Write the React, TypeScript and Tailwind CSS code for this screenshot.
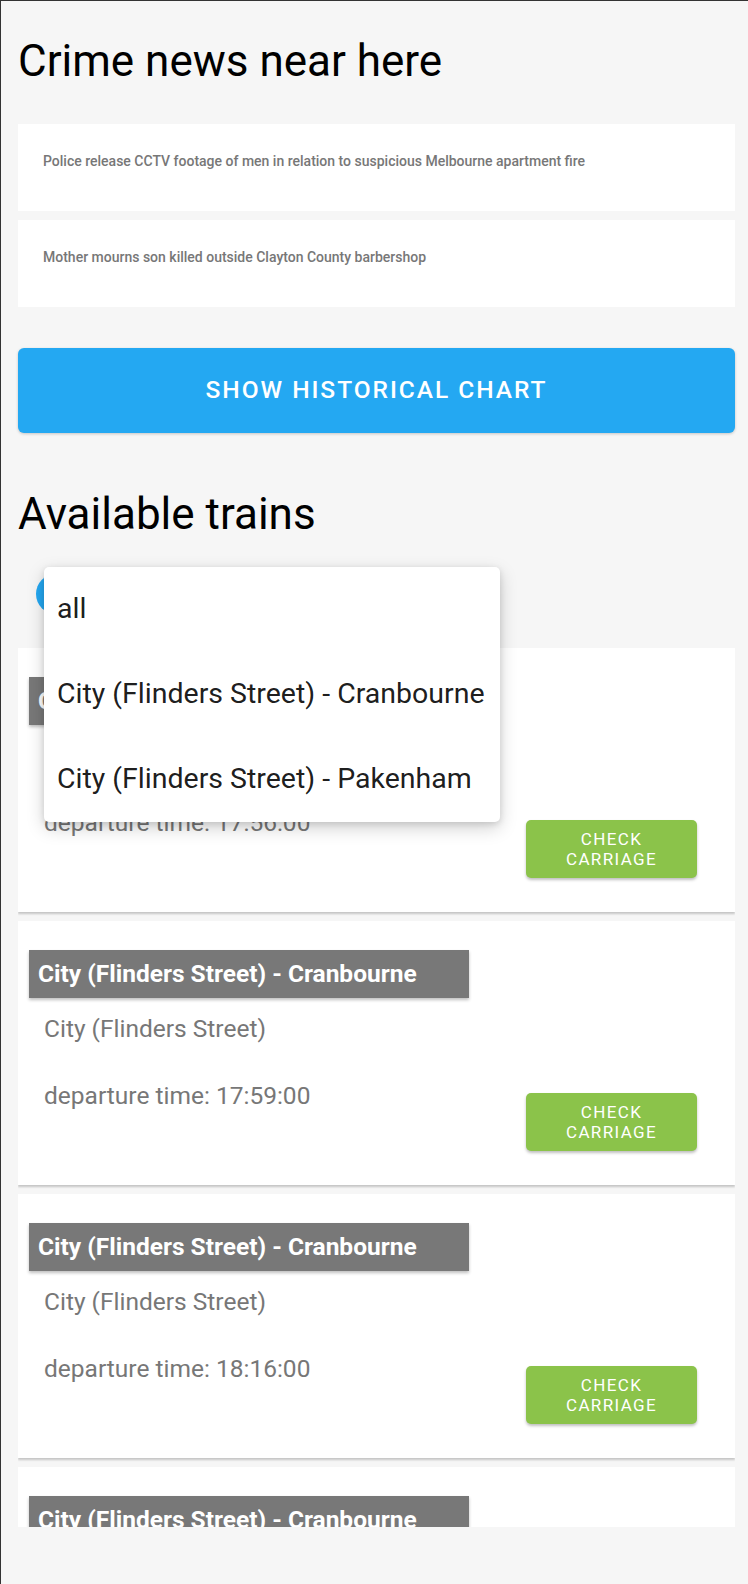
const news = [
  'Police release CCTV footage of men in relation to suspicious Melbourne apartment fire',
  'Mother mourns son killed outside Clayton County barbershop',
];

type Train = {
  line: string;
  station: string;
  departure: string;
};

const trains: Train[] = [
  { line: 'City (Flinders Street) - Cranbourne', station: 'City (Flinders Street)', departure: '17:56:00' },
  { line: 'City (Flinders Street) - Cranbourne', station: 'City (Flinders Street)', departure: '17:59:00' },
  { line: 'City (Flinders Street) - Cranbourne', station: 'City (Flinders Street)', departure: '18:16:00' },
  { line: 'City (Flinders Street) - Cranbourne', station: 'City (Flinders Street)', departure: '18:26:00' },
];

const menuOptions = ['all', 'City (Flinders Street) - Cranbourne', 'City (Flinders Street) - Pakenham'];

function TrainCard({ train }: { train: Train }) {
  return (
    <div className="h-[264px] shrink-0 bg-white shadow-[0_2px_2px_rgba(0,0,0,0.2)] pt-[29px] relative">
      <div className="ml-[11px] w-[440px] h-[48px] bg-[#787878] shadow-[0_2px_3px_rgba(0,0,0,0.25)] flex items-center pl-[9px]">
        <span className="text-white font-bold text-[24.5px] leading-none">{train.line}</span>
      </div>
      <p className="mt-[18px] ml-[26px] text-[24.5px] leading-[26px] text-[#777]">{train.station}</p>
      <div className="flex justify-between items-start mt-[41px] pl-[26px] pr-[38px]">
        <p className="text-[24.5px] leading-[26px] text-[#777]">departure time: {train.departure}</p>
        <button className="w-[171px] h-[58px] mt-[10px] rounded-[5px] bg-[#8bc34a] text-white text-[17px] leading-[20px] tracking-[0.08em] shadow-[0_2px_3px_rgba(0,0,0,0.25)]">
          CHECK
          <br />
          CARRIAGE
        </button>
      </div>
    </div>
  );
}

export default function App() {
  return (
    <div
      className="relative min-h-[1584px] bg-[#f6f6f6] border-l border-t border-[#333] pl-[17px] pr-[13px] overflow-hidden"
      style={{ fontFamily: 'Roboto, "Noto Sans", sans-serif' }}
    >
      <h1 className="pt-[38px] text-[44px] leading-[44px] text-black">Crime news near here</h1>

      <div className="mt-[41px] flex flex-col gap-[9px]">
        {news.map(item => (
          <div key={item} className="h-[87px] bg-white pl-[25px] pt-[28px]">
            <p className="text-[14px] leading-[18px] font-medium text-[#777]">{item}</p>
          </div>
        ))}
      </div>

      <button className="mt-[41px] w-full h-[85px] rounded-[6px] bg-[#24a8f2] text-white text-[24.5px] font-medium tracking-[0.08em] shadow-[0_1px_3px_rgba(0,0,0,0.2)]">
        SHOW HISTORICAL CHART
      </button>

      <h2 className="mt-[59px] text-[44px] leading-[44px] text-black">Available trains</h2>

      <div className="mt-[38px] ml-[18px] w-[40px] h-[40px] rounded-full bg-[#24a8f2]" />

      <div className="mt-[34px] h-[879px] overflow-hidden flex flex-col gap-[9px]">
        {trains.map((t, i) => (
          <TrainCard key={i} train={t} />
        ))}
      </div>

      {/* open select menu */}
      <ul className="absolute left-[43px] top-[566px] w-[456px] bg-white rounded-[5px] shadow-[0_6px_18px_rgba(0,0,0,0.18),0_2px_6px_rgba(0,0,0,0.12)]">
        {menuOptions.map(opt => (
          <li key={opt} className="h-[85px] flex items-center pl-[13px] text-[28.5px] text-black/90">
            {opt}
          </li>
        ))}
      </ul>
    </div>
  );
}
